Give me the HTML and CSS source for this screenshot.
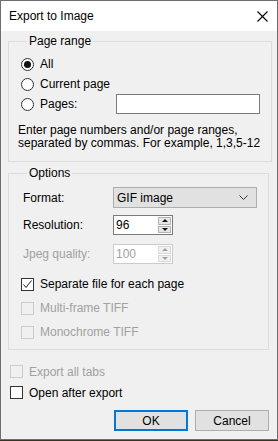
FILE: index.html
```html
<!DOCTYPE html>
<html lang="en">
<head>
    <meta charset="UTF-8">
    <title>Export to Image</title>
    <link rel="stylesheet" href="styles.css">
</head>
<body>
<div class="dialog">
    <div class="titlebar">
        <span class="title">Export to Image</span>
        <svg class="close" width="11" height="11" viewBox="0 0 11 11">
            <path d="M0.5 0.5L10.5 10.5M10.5 0.5L0.5 10.5" stroke="#000" stroke-width="1.1" fill="none"/>
        </svg>
    </div>
    <div class="content">
        <fieldset class="group range">
            <legend>Page range</legend>
            <div class="row"><span class="radio checked"></span><span>All</span></div>
            <div class="row"><span class="radio"></span><span>Current page</span></div>
            <div class="row"><span class="radio"></span><span class="grow">Pages:</span><span class="textbox"></span></div>
            <p class="hint">Enter page numbers and/or page ranges,<br>separated by commas. For example, 1,3,5-12</p>
        </fieldset>

        <fieldset class="group options">
            <legend>Options</legend>
            <div class="field format">
                <span class="label">Format:</span>
                <div class="combo">
                    <span>GIF image</span>
                    <svg width="9" height="5" viewBox="0 0 9 5"><path d="M0.5 0.5L4.5 4.5L8.5 0.5" stroke="#333" fill="none"/></svg>
                </div>
            </div>
            <div class="field res">
                <span class="label">Resolution:</span>
                <div class="spin">
                    <span class="value">96</span>
                    <div class="arrows">
                        <span class="up"></span>
                        <span class="down"></span>
                    </div>
                </div>
            </div>
            <div class="field jpeg disabled">
                <span class="label">Jpeg quality:</span>
                <div class="spin">
                    <span class="value">100</span>
                    <div class="arrows">
                        <span class="up"></span>
                        <span class="down"></span>
                    </div>
                </div>
            </div>
            <div class="check-row first">
                <span class="box">
                    <svg width="11" height="11" viewBox="0 0 11 11"><path d="M1.5 5.5L4 8.5L9.5 1.5" stroke="#222" stroke-width="1" fill="none"/></svg>
                </span>
                <span>Separate file for each page</span>
            </div>
            <div class="check-row disabled"><span class="box"></span><span>Multi-frame TIFF</span></div>
            <div class="check-row disabled"><span class="box"></span><span>Monochrome TIFF</span></div>
        </fieldset>

        <div class="check-row outer disabled"><span class="box"></span><span>Export all tabs</span></div>
        <div class="check-row outer"><span class="box"></span><span>Open after export</span></div>

        <div class="buttons">
            <div class="btn default">OK</div>
            <div class="btn">Cancel</div>
        </div>
    </div>
</div>
</body>
</html>
```

FILE: styles.css
```css
* {
    margin: 0;
    padding: 0;
    box-sizing: border-box;
}

body {
    background: #3a3322;
    font-family: "Liberation Sans", Arial, sans-serif;
    font-size: 12px;
    color: #000;
}

.dialog {
    width: 278px;
    height: 440px;
    background: #f0f0f0;
    border: 1px solid #6e6e6e;
}

.titlebar {
    height: 30px;
    background: #fff;
    display: flex;
    align-items: center;
    padding-left: 8px;
    padding-right: 9px;
}

.title {
    flex: 1;
    font-size: 12px;
}

.content {
    padding: 0 8px 0 7px;
}

.group {
    border: 1px solid #dcdcdc;
    padding: 0 11px 0 12px;
}

.group legend {
    margin-left: 6px;
    padding: 0 2px;
    line-height: 16px;
}

.range {
    margin-top: 2px;
    padding-top: 5px;
    padding-bottom: 11px;
}

.row {
    display: flex;
    align-items: center;
    height: 20px;
}

.grow {
    flex: 1;
}

.radio {
    width: 13px;
    height: 13px;
    border: 1px solid #333;
    border-radius: 50%;
    margin-right: 6px;
    background: #fff;
    display: flex;
    align-items: center;
    justify-content: center;
}

.radio.checked::after {
    content: "";
    width: 7px;
    height: 7px;
    border-radius: 50%;
    background: #111;
}

.textbox {
    width: 144px;
    height: 20px;
    background: #fff;
    border: 1px solid #7a7a7a;
}

.hint {
    margin: 10px 0 0 -3px;
    line-height: 13px;
    white-space: nowrap;
}

.options {
    margin-top: 3px;
    padding-top: 6px;
    padding-bottom: 5px;
}

.field {
    display: flex;
    align-items: center;
    padding-left: 2px;
}

.field .label {
    width: 90px;
}

.res {
    margin-top: 7px;
}

.jpeg {
    margin-top: 9px;
}

.disabled {
    color: #a0a0a0;
}

.combo {
    width: 144px;
    height: 21px;
    background: #e1e1e1;
    border: 1px solid #adadad;
    display: flex;
    align-items: center;
    justify-content: space-between;
    padding: 0 8px 0 3px;
}

.spin {
    width: 60px;
    height: 20px;
    background: #fff;
    border: 1px solid #7a7a7a;
    display: flex;
    align-items: center;
    padding: 0 1px 0 2px;
}

.spin .value {
    flex: 1;
}

.arrows {
    width: 13px;
    height: 16px;
    display: flex;
    flex-direction: column;
    gap: 1px;
}

.arrows span {
    flex: 1;
    background: #e6e6e6;
    border: 1px solid #b4b4b4;
    display: flex;
    align-items: center;
    justify-content: center;
}

.arrows .up::after,
.arrows .down::after {
    content: "";
    border-left: 3px solid transparent;
    border-right: 3px solid transparent;
}

.arrows .up::after {
    border-bottom: 3px solid #111;
}

.arrows .down::after {
    border-top: 3px solid #111;
}

.jpeg .spin {
    border-color: #cccccc;
}

.jpeg .arrows span {
    background: #f0f0f0;
    border-color: #d9d9d9;
}

.jpeg .arrows .up::after {
    border-bottom-color: #a0a0a0;
}

.jpeg .arrows .down::after {
    border-top-color: #a0a0a0;
}

.check-row {
    display: flex;
    align-items: center;
    height: 24px;
}

.check-row.first {
    margin-top: 8px;
}

.box {
    width: 13px;
    height: 13px;
    border: 1px solid #333;
    background: #fff;
    margin-right: 6px;
    display: flex;
    align-items: center;
    justify-content: center;
}

.disabled .box {
    border-color: #cccccc;
    background: #f0f0f0;
}

.outer {
    height: 21px;
    padding-left: 2px;
}

.outer.disabled {
    margin-top: 11px;
}

.buttons {
    display: flex;
    justify-content: flex-end;
    gap: 7px;
    margin-top: 7px;
}

.btn {
    width: 74px;
    height: 21px;
    background: #e1e1e1;
    border: 1px solid #adadad;
    display: flex;
    align-items: center;
    justify-content: center;
}

.btn.default {
    border: 2px solid #0078d7;
}
```
